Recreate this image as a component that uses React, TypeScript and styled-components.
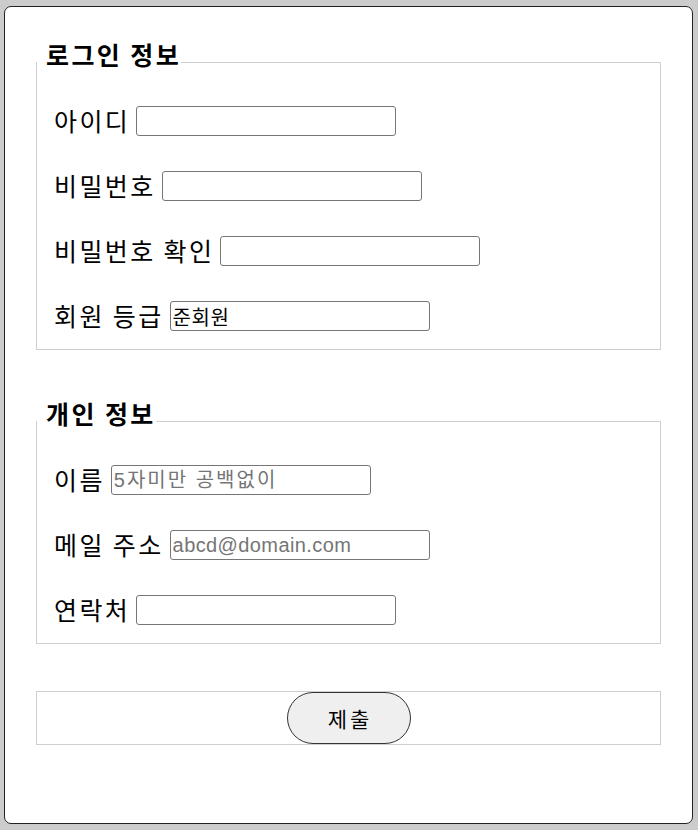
import React from "react";
import styled, { createGlobalStyle } from "styled-components";

const GlobalStyle = createGlobalStyle`
  html, body {
    margin: 0;
    padding: 0;
    background: #cccccc;
  }
  body {
    font-family: "Liberation Sans", "Noto Sans CJK KR", sans-serif;
    color: #000;
  }
`;

const Page = styled.div`
  box-sizing: border-box;
  width: 689px;
  height: 818px;
  margin: 6px 0 0 4px;
  padding: 35px 31px 0;
  background: #ffffff;
  border: 1px solid #222222;
  border-radius: 7px;
`;

const Form = styled.form`
  display: flex;
  flex-direction: column;
  margin: 0;
`;

const Fieldset = styled.fieldset<{ $spaceAbove?: number }>`
  margin: ${(p) => p.$spaceAbove ?? 0}px 0 0;
  padding: 0;
  min-inline-size: 0;
  border: 1px solid #cfcfcf;
`;

const Legend = styled.legend`
  padding: 0 0 16px 9px;
  margin: 0;
  font-family: "Noto Sans CJK KR", sans-serif;
  font-size: 25px;
  line-height: 24px;
  letter-spacing: 2.4px;
  font-weight: 700;
`;

const Rows = styled.div`
  display: flex;
  flex-direction: column;
  gap: 35px;
  padding: 24px 17px 18px;
`;

const Row = styled.div`
  display: flex;
  align-items: center;
  height: 30px;
`;

const Label = styled.label`
  font-family: "Noto Sans CJK KR", sans-serif;
  font-size: 25px;
  line-height: 30px;
  letter-spacing: 2.4px;
  margin-right: 6px;
  padding-bottom: 3px;
  white-space: nowrap;
`;

const Input = styled.input<{ $tracking?: number }>`
  box-sizing: border-box;
  width: 260px;
  height: 30px;
  padding: 1px 2px;
  border: 1px solid #767676;
  border-radius: 3px;
  font-family: "Liberation Sans", "Noto Sans CJK KR", sans-serif;
  font-size: 20px;
  letter-spacing: ${(p) => p.$tracking ?? 0.6}px;
  color: #000;
  background: #fff;
  outline: none;
  &::placeholder {
    color: #757575;
  }
`;

const ButtonFieldset = styled(Fieldset)`
  display: flex;
  justify-content: center;
`;

const SubmitButton = styled.button`
  box-sizing: border-box;
  width: 124px;
  height: 52px;
  padding: 0 0 0 3px;
  border: 1px solid #333333;
  border-radius: 26px;
  background: #efefef;
  font-family: "Noto Sans CJK KR", sans-serif;
  font-size: 21px;
  letter-spacing: 3px;
  color: #000;
  cursor: pointer;
`;

type Field = {
  label: string;
  type?: string;
  value?: string;
  placeholder?: string;
  tracking?: number;
};

const loginFields: Field[] = [
  { label: "아이디" },
  { label: "비밀번호", type: "password" },
  { label: "비밀번호 확인", type: "password" },
  { label: "회원 등급", value: "준회원" },
];

const personalFields: Field[] = [
  { label: "이름", placeholder: "5자미만 공백없이", tracking: 2 },
  { label: "메일 주소", type: "email", placeholder: "abcd@domain.com", tracking: 0.4 },
  { label: "연락처", type: "tel" },
];

const FieldRows: React.FC<{ fields: Field[] }> = ({ fields }) => (
  <Rows>
    {fields.map((f) => (
      <Row key={f.label}>
        <Label>{f.label}</Label>
        <Input
          type={f.type ?? "text"}
          placeholder={f.placeholder}
          defaultValue={f.value}
          readOnly={f.value !== undefined}
          $tracking={f.tracking}
        />
      </Row>
    ))}
  </Rows>
);

export default function App() {
  return (
    <>
      <GlobalStyle />
      <Page>
        <Form onSubmit={(e) => e.preventDefault()}>
          <Fieldset>
            <Legend>로그인 정보</Legend>
            <FieldRows fields={loginFields} />
          </Fieldset>
          <Fieldset $spaceAbove={51}>
            <Legend>개인 정보</Legend>
            <FieldRows fields={personalFields} />
          </Fieldset>
          <ButtonFieldset $spaceAbove={47}>
            <SubmitButton type="submit">제출</SubmitButton>
          </ButtonFieldset>
        </Form>
      </Page>
    </>
  );
}
